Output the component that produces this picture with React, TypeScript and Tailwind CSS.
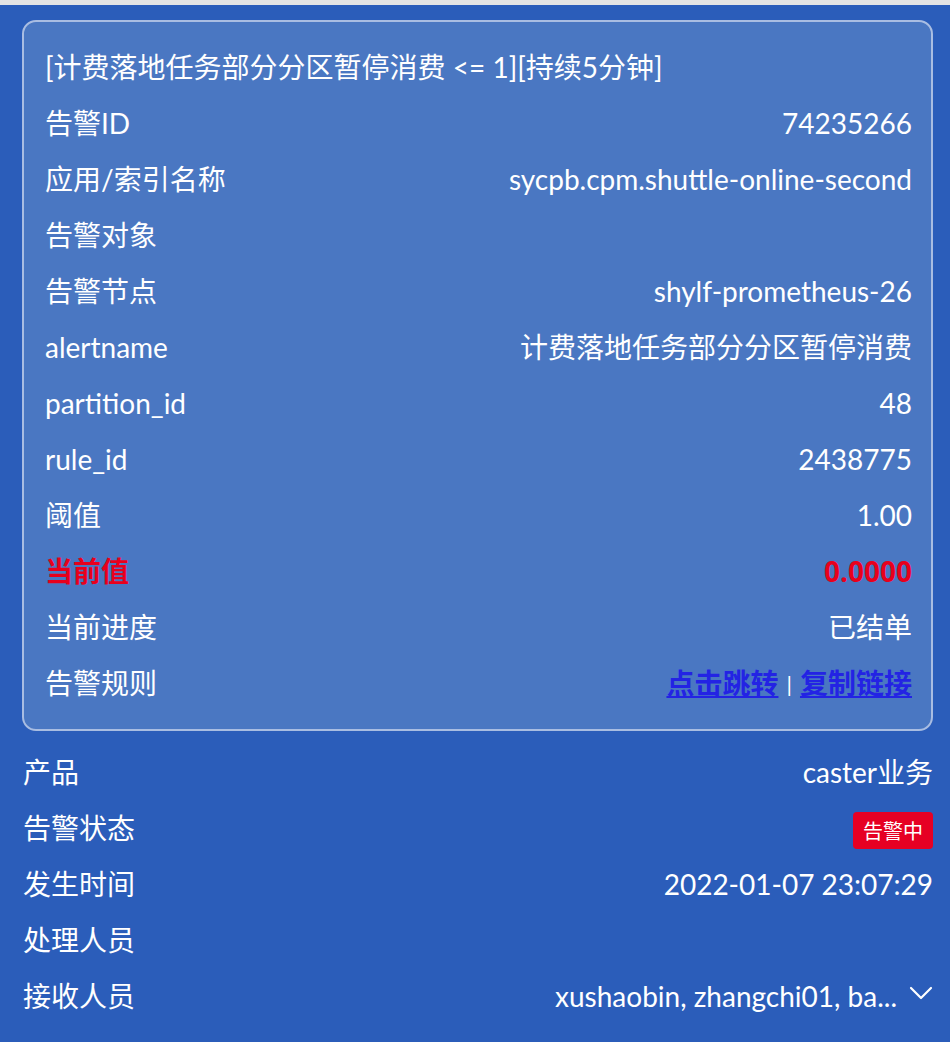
import type { ReactNode } from "react";

const FONT = "font-['Lato','Noto_Sans_CJK_SC',sans-serif]";

type Item = { label: ReactNode; value?: ReactNode };

const CARD_ROWS: Item[] = [
  { label: "告警ID", value: "74235266" },
  { label: "应用/索引名称", value: "sycpb.cpm.shuttle-online-second" },
  { label: "告警对象" },
  { label: "告警节点", value: "shylf-prometheus-26" },
  { label: "alertname", value: "计费落地任务部分分区暂停消费" },
  { label: "partition_id", value: "48" },
  { label: "rule_id", value: "2438775" },
  { label: "阈值", value: "1.00" },
  {
    label: <span className="font-bold text-[#e8001c]">当前值</span>,
    value: <span className="font-['Open_Sans'] font-bold text-[#e8001c]">0.0000</span>,
  },
  { label: "当前进度", value: "已结单" },
  {
    label: "告警规则",
    value: (
      <span className="flex items-center">
        <a className="font-semibold text-[#2323e4] underline underline-offset-2">点击跳转</a>
        <span className="mx-[8px] text-[22px] text-white">|</span>
        <a className="font-semibold text-[#2323e4] underline underline-offset-2">复制链接</a>
      </span>
    ),
  },
];

function Row({ label, value }: Item) {
  return (
    <div className="flex h-[56px] items-center justify-between">
      <span>{label}</span>
      <span className="text-right">{value}</span>
    </div>
  );
}

export default function App() {
  return (
    <main className={`min-h-screen bg-[#2b5dba] text-[28px] text-white ${FONT}`}>
      <div className="h-[5px] bg-[#e4e4e4]" />

      <div className="pl-[22px] pr-[17px] pt-[15px]">
        <section className="rounded-[14px] border-2 border-[#a9bde2] bg-[#4a77c2] pb-[18px] pl-[21px] pr-[19px] pt-[17px]">
          <Row label="[计费落地任务部分分区暂停消费 <= 1][持续5分钟]" />
          {CARD_ROWS.map((r, i) => (
            <Row key={i} label={r.label} value={r.value} />
          ))}
        </section>

        <section className="mt-[13px] pl-[1px]">
          <Row label="产品" value="caster业务" />
          <Row
            label="告警状态"
            value={
              <span className="inline-flex h-[37px] items-center rounded-[4px] bg-[#e60023] px-[10px] text-[20px]">
                告警中
              </span>
            }
          />
          <Row label="发生时间" value="2022-01-07 23:07:29" />
          <Row label="处理人员" />
          <Row
            label="接收人员"
            value={
              <span className="flex items-center gap-[12px]">
                xushaobin, zhangchi01, ba...
                <svg width="24" height="14" viewBox="0 0 24 14" fill="none" className="mb-[6px]">
                  <polyline points="2,2 12,12 22,2" stroke="white" strokeWidth="2.2" strokeLinecap="round" strokeLinejoin="round" />
                </svg>
              </span>
            }
          />
        </section>
      </div>
    </main>
  );
}
